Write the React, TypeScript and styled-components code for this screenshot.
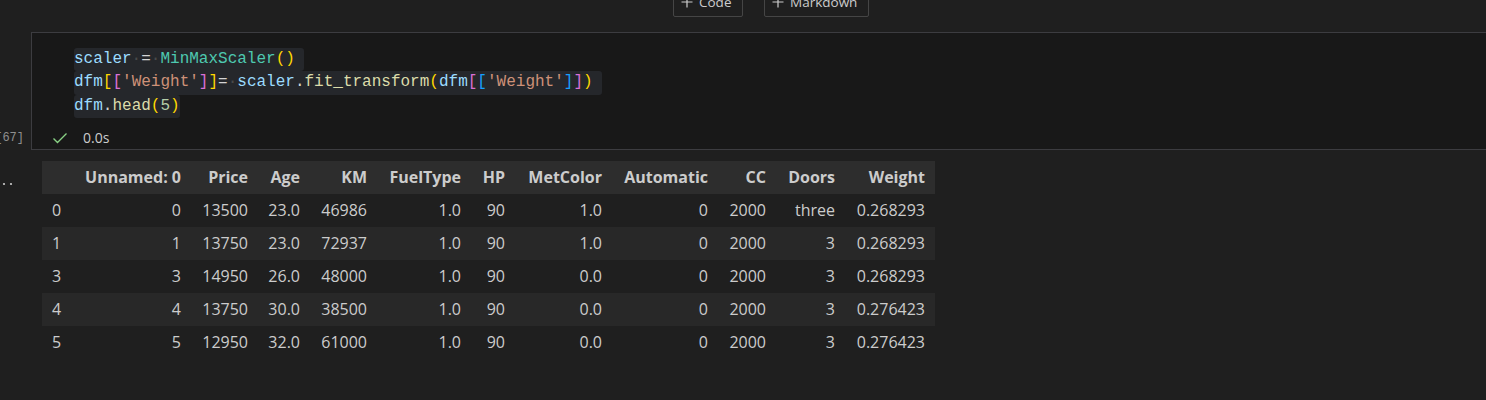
import React from "react";
import styled, { createGlobalStyle } from "styled-components";

const Global = createGlobalStyle`
  html, body { margin: 0; padding: 0; background: #1f1f1f; overflow: hidden; }
  body { font-family: "Open Sans", "Noto Sans", sans-serif; color: #cccccc; }
`;

const Page = styled.div`
  width: 1486px;
  height: 400px;
  background: #1f1f1f;
  display: flex;
  flex-direction: column;
`;

const Toolbar = styled.div`
  height: 32px;
  display: flex;
  align-items: flex-end;
  gap: 21px;
  padding-left: 673px;
  padding-bottom: 15px;
  box-sizing: border-box;
`;

const AddButton = styled.div<{ $w: number }>`
  height: 28px;
  flex-shrink: 0;
  box-sizing: border-box;
  border: 1px solid #454545;
  border-radius: 2px;
  display: flex;
  align-items: center;
  gap: 6px;
  padding: 0 0 2px 7px;
  width: ${(p) => p.$w}px;
  font-size: 13.5px;
  color: #cccccc;
`;

const CellRow = styled.div`
  display: flex;
`;

const ExecGutter = styled.div`
  width: 31px;
  flex-shrink: 0;
  display: flex;
  justify-content: flex-end;
  align-items: flex-end;
  padding-right: 7px;
  padding-bottom: 3px;
  box-sizing: border-box;
  overflow: hidden;
  font-family: "Liberation Mono", monospace;
  font-size: 12px;
  color: #8f8f8f;
  line-height: 18px;
`;

const Cell = styled.div`
  flex: 1;
  background: #181818;
  border: 1px solid #3c3c40;
  border-right: none;
  display: flex;
  flex-direction: column;
`;

const Editor = styled.div`
  padding: 15px 0 6px 42px;
  display: flex;
  flex-direction: column;
  font-family: "Liberation Mono", monospace;
  font-size: 16px;
  line-height: 23.3px;
  color: #d4d4d4;
`;

const Line = styled.div`
  display: flex;
`;

const Sel = styled.span<{ $nl?: boolean }>`
  background: #25272b;
  border-radius: 3px;
  white-space: pre;
  padding-right: ${(p) => (p.$nl ? "9.6px" : "0")};
`;

const Tok = styled.span<{ $c: string }>`
  color: ${(p) => p.$c};
`;

const Ws = styled.span`
  color: #4a4a4a;
`;

const StatusRow = styled.div`
  height: 25px;
  box-sizing: border-box;
  padding-top: 3px;
  display: flex;
  align-items: center;
  padding-left: 20px;
  gap: 15px;
  font-size: 14px;
  color: #cccccc;
`;

const OutputRow = styled.div`
  display: flex;
  padding-top: 11px;
`;

const OutputGutter = styled.div`
  width: 42px;
  flex-shrink: 0;
  padding-top: 8px;
`;

const Table = styled.table`
  border-collapse: collapse;
  table-layout: fixed;
  width: 893px;
  font-size: 16px;
  color: #cccccc;
`;

const HeadRow = styled.tr`
  background: #2d2d2d;
  height: 33px;
`;

const BodyRow = styled.tr<{ $striped: boolean }>`
  background: ${(p) => (p.$striped ? "#282828" : "transparent")};
  height: 33px;
`;

const Th = styled.th`
  padding: 0 10px;
  text-align: right;
  font-weight: 700;
  white-space: nowrap;
  vertical-align: middle;
`;

const IndexCell = styled.td`
  padding: 0 10px;
  text-align: left;
  white-space: nowrap;
`;

const Td = styled.td`
  padding: 0 10px;
  text-align: right;
  white-space: nowrap;
`;

const C = {
  var: "#9cdcfe",
  op: "#d4d4d4",
  cls: "#4ec9b0",
  fn: "#dcdcaa",
  str: "#ce9178",
  num: "#b5cea8",
  b1: "#ffd700",
  b2: "#da70d6",
  b3: "#179fff",
};

const cols = [30, 119, 67, 52, 67, 94, 44, 97, 106, 58, 69, 90];
const headers = ["", "Unnamed: 0", "Price", "Age", "KM", "FuelType", "HP", "MetColor", "Automatic", "CC", "Doors", "Weight"];
const rows = [
  ["0", "0", "13500", "23.0", "46986", "1.0", "90", "1.0", "0", "2000", "three", "0.268293"],
  ["1", "1", "13750", "23.0", "72937", "1.0", "90", "1.0", "0", "2000", "3", "0.268293"],
  ["3", "3", "14950", "26.0", "48000", "1.0", "90", "0.0", "0", "2000", "3", "0.268293"],
  ["4", "4", "13750", "30.0", "38500", "1.0", "90", "0.0", "0", "2000", "3", "0.276423"],
  ["5", "5", "12950", "32.0", "61000", "1.0", "90", "0.0", "0", "2000", "3", "0.276423"],
];

const Plus = () => (
  <svg width="12" height="12" viewBox="0 0 12 12">
    <path d="M6 0.5V11.5M0.5 6H11.5" stroke="#cccccc" strokeWidth="1.2" />
  </svg>
);

export default function App() {
  return (
    <Page>
      <Global />
      <Toolbar>
        <AddButton $w={70}>
          <Plus />
          Code
        </AddButton>
        <AddButton $w={105}>
          <Plus />
          Markdown
        </AddButton>
      </Toolbar>
      <CellRow>
        <ExecGutter>[67]</ExecGutter>
        <Cell>
          <Editor>
            <Line>
              <Sel $nl>
                <Tok $c={C.var}>scaler</Tok>
                <Ws>·</Ws>
                <Tok $c={C.op}>=</Tok>
                <Ws>·</Ws>
                <Tok $c={C.cls}>MinMaxScaler</Tok>
                <Tok $c={C.b1}>()</Tok>
              </Sel>
            </Line>
            <Line>
              <Sel $nl>
                <Tok $c={C.var}>dfm</Tok>
                <Tok $c={C.b1}>[</Tok>
                <Tok $c={C.b2}>[</Tok>
                <Tok $c={C.str}>'Weight'</Tok>
                <Tok $c={C.b2}>]</Tok>
                <Tok $c={C.b1}>]</Tok>
                <Tok $c={C.op}>=</Tok>
                <Ws>·</Ws>
                <Tok $c={C.var}>scaler</Tok>
                <Tok $c={C.op}>.</Tok>
                <Tok $c={C.fn}>fit_transform</Tok>
                <Tok $c={C.b1}>(</Tok>
                <Tok $c={C.var}>dfm</Tok>
                <Tok $c={C.b2}>[</Tok>
                <Tok $c={C.b3}>[</Tok>
                <Tok $c={C.str}>'Weight'</Tok>
                <Tok $c={C.b3}>]</Tok>
                <Tok $c={C.b2}>]</Tok>
                <Tok $c={C.b1}>)</Tok>
              </Sel>
            </Line>
            <Line>
              <Sel>
                <Tok $c={C.var}>dfm</Tok>
                <Tok $c={C.op}>.</Tok>
                <Tok $c={C.fn}>head</Tok>
                <Tok $c={C.b1}>(</Tok>
                <Tok $c={C.num}>5</Tok>
                <Tok $c={C.b1}>)</Tok>
              </Sel>
            </Line>
          </Editor>
          <StatusRow>
            <svg width="16" height="16" viewBox="0 0 16 16">
              <path d="M1.5 8.5L5.5 12.5L14.5 3.5" fill="none" stroke="#89d185" strokeWidth="1.4" />
            </svg>
            <span>0.0s</span>
          </StatusRow>
        </Cell>
      </CellRow>
      <OutputRow>
        <OutputGutter>
          <svg width="16" height="4" viewBox="0 0 16 4">
            <circle cx="4" cy="2" r="1.1" fill="#cccccc" />
            <circle cx="11" cy="2" r="1.1" fill="#cccccc" />
          </svg>
        </OutputGutter>
        <Table>
          <colgroup>
            {cols.map((w, i) => (
              <col key={i} style={{ width: w }} />
            ))}
          </colgroup>
          <thead>
            <HeadRow>
              {headers.map((h, i) => (
                <Th key={i}>{h}</Th>
              ))}
            </HeadRow>
          </thead>
          <tbody>
            {rows.map((r, ri) => (
              <BodyRow key={ri} $striped={ri % 2 === 1}>
                <IndexCell>{r[0]}</IndexCell>
                {r.slice(1).map((v, ci) => (
                  <Td key={ci}>{v}</Td>
                ))}
              </BodyRow>
            ))}
          </tbody>
        </Table>
      </OutputRow>
    </Page>
  );
}
